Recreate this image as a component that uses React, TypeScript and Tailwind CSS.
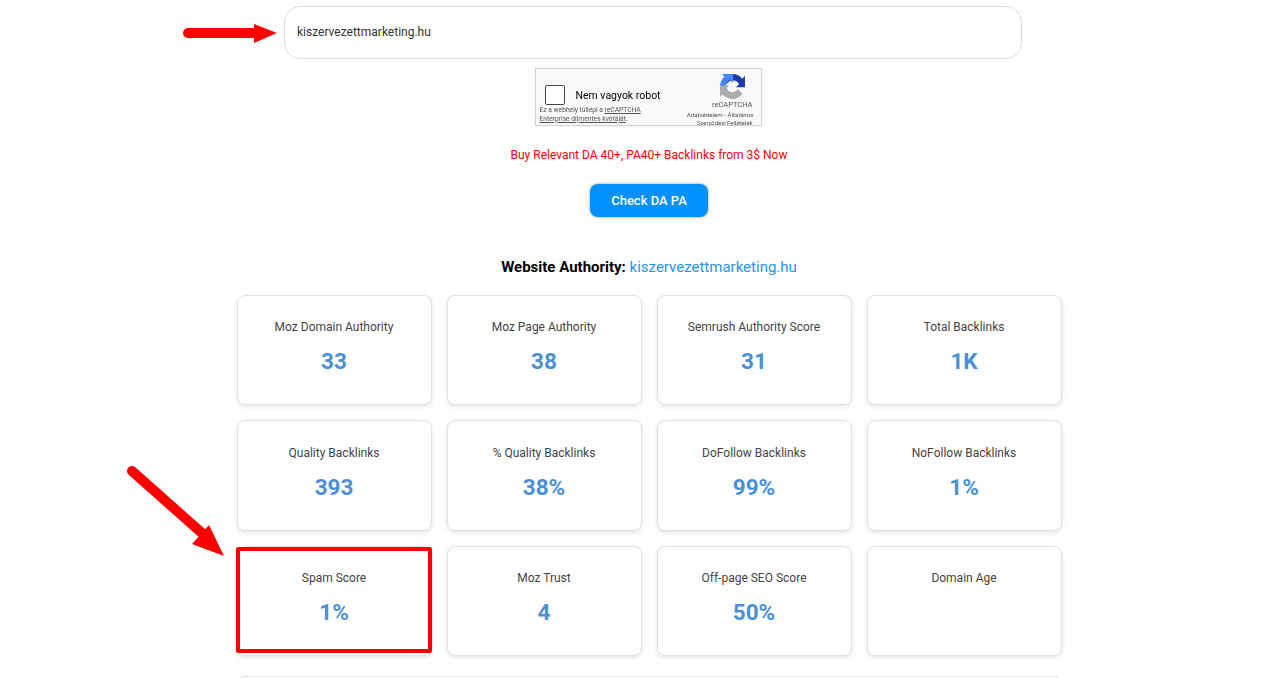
const CARDS = [
  { label: 'Moz Domain Authority', value: '33' },
  { label: 'Moz Page Authority', value: '38' },
  { label: 'Semrush Authority Score', value: '31' },
  { label: 'Total Backlinks', value: '1K' },
  { label: 'Quality Backlinks', value: '393' },
  { label: '% Quality Backlinks', value: '38%' },
  { label: 'DoFollow Backlinks', value: '99%' },
  { label: 'NoFollow Backlinks', value: '1%' },
  { label: 'Spam Score', value: '1%', marked: true },
  { label: 'Moz Trust', value: '4' },
  { label: 'Off-page SEO Score', value: '50%' },
  { label: 'Domain Age', value: '' },
];

function Card({ label, value, marked }: { label: string; value: string; marked?: boolean }) {
  return (
    <div className="relative h-[110.4px] rounded-lg border border-[#e0e0e0] bg-white pt-[23.2px] text-center shadow-[0_2px_5px_rgba(0,0,0,0.1)]">
      <div className="h-[16px] text-[12px] leading-[16px] text-[#444]">{label}</div>
      <div className="mt-[11px] h-[30px] text-[22.5px] leading-[30px] font-bold text-[#4a90d9]">{value}</div>
      {marked && <div className="absolute top-0 -left-[2px] h-[106.5px] w-[196px] rounded-[2px] border-[4px] border-[#ff0000]" />}
    </div>
  );
}

function Captcha() {
  return (
    <div className="relative h-[58px] w-[227px] overflow-hidden border border-[#d3d3d3] bg-[#f9f9f9] shadow-[0_0_3px_rgba(0,0,0,0.08)] blur-[0.3px]">
      <div className="absolute top-[16px] left-[9px] h-[20px] w-[20px] rounded-[2px] border-[1.5px] border-[#444] bg-white" />
      <div className="absolute top-[20.5px] left-[40px] text-[10.5px] leading-[12px] text-black">Nem vagyok robot</div>
      <div className="absolute top-[36.5px] left-[4px] text-[6.7px] leading-[9px] text-[#555]">
        Ez a webhely túllépi a <span className="underline">reCAPTCHA</span>
        <br />
        <span className="underline">Enterprise díjmentes kvótáját</span>.
      </div>
      <svg className="absolute top-[5px] left-[184px]" width="25" height="25" viewBox="0 0 64 64">
        <path d="M64 31.955l-.033-1.37V4.687l-7.16 7.16C50.948 4.674 42.033.093 32.05.093c-10.4 0-19.622 4.96-25.458 12.64l11.736 11.86a15.55 15.55 0 0 1 4.754-5.334c2.05-1.6 4.952-2.906 9.968-2.906.606 0 1.074.07 1.418.202 6.216.49 11.604 3.92 14.774 8.9l-8.308 8.308c10.523-.04 22.4-.066 24.07.175" fill="#1c3aa9" />
        <path d="M31.862.094l-1.37.033H4.594l7.16 7.16C4.58 13.147 0 22.06 0 32.046c0 10.4 4.96 19.622 12.64 25.458L24.5 45.768a15.55 15.55 0 0 1-5.334-4.754c-1.6-2.05-2.906-4.952-2.906-9.968 0-.606.07-1.074.202-1.418.49-6.216 3.92-11.604 8.9-14.774l8.308 8.308c-.04-10.523-.066-22.4.175-24.07" fill="#4285f4" />
        <path d="M.001 32.04l.033 1.37v25.898l7.16-7.16c5.86 7.173 14.774 11.754 24.76 11.754 10.4 0 19.622-4.96 25.458-12.64L45.677 38.404a15.55 15.55 0 0 1-4.754 5.334c-2.05 1.6-4.952 2.906-9.968 2.906-.606 0-1.074-.07-1.418-.202-6.216-.49-11.604-3.92-14.774-8.9l8.308-8.308c-10.523.04-22.4.066-24.07-.175" fill="#ababab" />
      </svg>
      <div className="absolute top-[31px] right-[8px] text-[7.5px] leading-[9px] text-[#555]">reCAPTCHA</div>
      <div className="absolute top-[43px] right-[7px] text-[6.2px] leading-[7px] text-[#555]">Adatvédelem - Általános</div>
      <div className="absolute top-[51px] right-[8px] text-[5.9px] leading-[7px] text-[#555]">Szerződési Feltételek</div>
    </div>
  );
}

export default function App() {
  return (
    <div className="relative h-[678px] overflow-hidden bg-white font-['Roboto',sans-serif]">
      <div className="flex flex-col items-center pt-[6px] pl-[17px]">
        <div className="ml-[7px] flex h-[53px] w-[738px] items-center rounded-2xl border border-[#dcdcdc] bg-white pb-[2px] pl-[12.5px] text-[12px] text-[#333]">
          kiszervezettmarketing.hu
        </div>
        <div className="mt-[9px] mr-[2px]">
          <Captcha />
        </div>
        <p className="mt-[21px] text-[12px] leading-[16px] text-[#ff0000]">Buy Relevant DA 40+, PA40+ Backlinks from 3$ Now</p>
        <button className="mt-[21px] h-[33px] w-[118px] rounded-lg bg-[#0091ff] text-[13px] font-medium text-white shadow-[0_0_3px_rgba(0,0,0,0.45)]">
          Check DA PA
        </button>
        <h2 className="mt-[40px] text-[15px] leading-[20px] font-bold text-black">
          Website Authority: <a className="font-normal text-[#2196f3]">kiszervezettmarketing.hu</a>
        </h2>
        <div className="mt-[18px] grid w-[825px] grid-cols-4 gap-[15px]">
          {CARDS.map((c) => (
            <Card key={c.label} {...c} />
          ))}
        </div>
        <div className="mt-[20px] h-[40px] w-[825px] rounded-lg border border-[#e0e0e0] bg-white" />
      </div>

      {/* annotation arrows */}
      <svg className="absolute top-0 left-0" width="1281" height="678" fill="none">
        <path d="M188 33 H256" stroke="#ff0000" strokeWidth="10" strokeLinecap="round" />
        <polygon points="254,24 277,33 254,43" fill="#ff0000" />
        <path d="M132 471 L203 534" stroke="#ff0000" strokeWidth="10" strokeLinecap="round" />
        <polygon points="209,525 224,556 192,544" fill="#ff0000" />
      </svg>
    </div>
  );
}
